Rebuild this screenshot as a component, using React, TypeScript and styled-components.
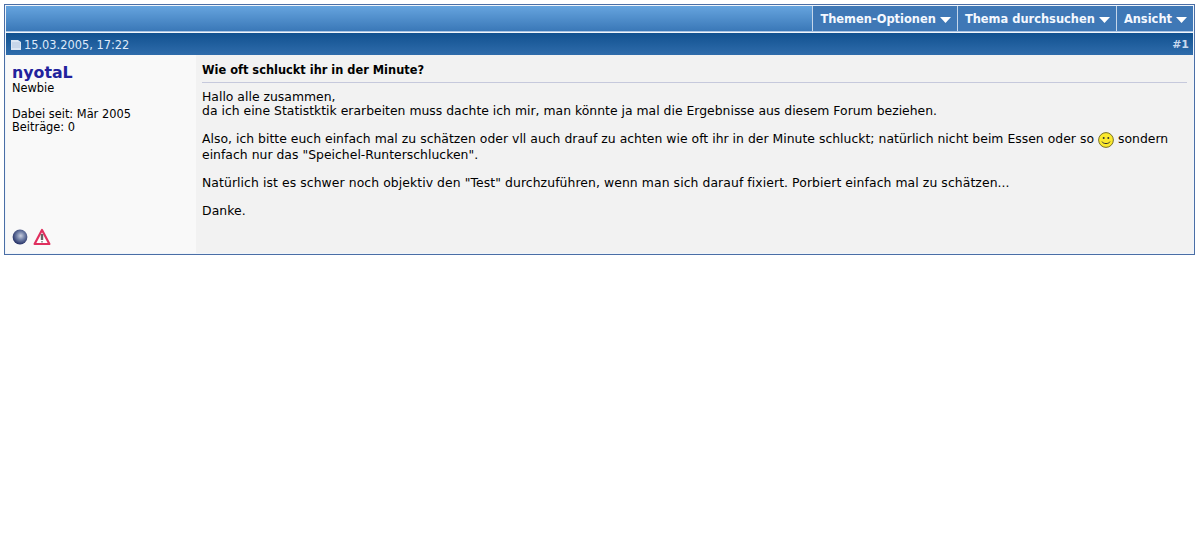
import { createGlobalStyle } from "styled-components";
import styled from "styled-components";

const Global = createGlobalStyle`
  html, body {
    margin: 0;
    padding: 0;
    background: #fff;
  }
  body {
    font-family: "DejaVu Sans", Verdana, sans-serif;
    color: #000;
  }
`;

const menuItems = ["Themen-Optionen", "Thema durchsuchen", "Ansicht"];

export default function App() {
  return (
    <Page>
      <Global />
      <Frame>
        <Toolbar>
          {menuItems.map((item) => (
            <MenuCell key={item}>
              {item}
              <Caret viewBox="0 0 11 6">
                <path d="M0 0h11L5.5 6z" fill="#fff" />
              </Caret>
            </MenuCell>
          ))}
        </Toolbar>

        <PostHead>
          <DateLine>
            <PostIcon viewBox="0 0 10 10">
              <path d="M0 0h7l3 2v8H0z" fill="#dbe5f3" />
              <path d="M1 3h8M1 5h8M1 7h8" stroke="#b4c6e0" strokeWidth="1" />
            </PostIcon>
            15.03.2005, 17:22
          </DateLine>
          <PostNumber>#1</PostNumber>
        </PostHead>

        <PostRow>
          <UserColumn>
            <UserName>nyotaL</UserName>
            <UserTitle>Newbie</UserTitle>
            <UserStats>
              <div>Dabei seit: Mär 2005</div>
              <div>Beiträge: 0</div>
            </UserStats>
            <UserIcons>
              <svg width="16" height="16" viewBox="0 0 16 16">
                <defs>
                  <radialGradient id="orb" cx="0.55" cy="0.42" r="0.6">
                    <stop offset="0" stopColor="#c9cede" />
                    <stop offset="0.45" stopColor="#7382a8" />
                    <stop offset="1" stopColor="#1f2b62" />
                  </radialGradient>
                </defs>
                <circle cx="8" cy="8" r="7.4" fill="url(#orb)" />
              </svg>
              <svg width="18" height="18" viewBox="0 0 18 18">
                <path d="M9 2 16.4 16H1.6z" fill="#fff" stroke="#e0305f" strokeWidth="2.2" strokeLinejoin="round" />
                <path d="M9 6v6" stroke="#666" strokeWidth="2.4" />
                <path d="M9 13v1.6" stroke="#888" strokeWidth="1.6" />
              </svg>
            </UserIcons>
          </UserColumn>

          <MessageColumn>
            <MessageTitle>Wie oft schluckt ihr in der Minute?</MessageTitle>
            <Paragraph>
              Hallo alle zusammen,
              <br />
              da ich eine Statistktik erarbeiten muss dachte ich mir, man könnte ja mal die Ergebnisse aus diesem Forum beziehen.
            </Paragraph>
            <Paragraph $tracking={0.022}>
              Also, ich bitte euch einfach mal zu schätzen oder vll auch drauf zu achten wie oft ihr in der Minute schluckt; natürlich nicht beim Essen oder so{" "}
              <Smiley viewBox="0 0 16 16">
                <circle cx="8" cy="8" r="7.4" fill="#fbe92e" stroke="#6b6320" strokeWidth="0.9" />
                <circle cx="5.7" cy="6" r="1" fill="#333" />
                <circle cx="10.3" cy="6" r="1" fill="#333" />
                <path d="M4 9.6c1.2 2.6 6.8 2.6 8 0" fill="none" stroke="#333" strokeWidth="1" />
              </Smiley>{" "}
              sondern
              <br />
              einfach nur das "Speichel-Runterschlucken".
            </Paragraph>
            <Paragraph $tracking={0.08}>
              Natürlich ist es schwer noch objektiv den "Test" durchzuführen, wenn man sich darauf fixiert. Porbiert einfach mal zu schätzen...
            </Paragraph>
            <Paragraph $tracking={0.1}>Danke.</Paragraph>
          </MessageColumn>
        </PostRow>
      </Frame>
    </Page>
  );
}

const Page = styled.div`
  padding: 4px 4px 0;
  min-height: 100vh;
  box-sizing: border-box;
`;

const Frame = styled.div`
  width: 1191px;
  box-sizing: border-box;
  border: 1px solid #4a6ea6;
  background: #f0f5fb;
  padding: 1px;
`;

const Toolbar = styled.div`
  display: flex;
  justify-content: flex-end;
  height: 25px;
  background: linear-gradient(#66a4de, #3a78b8);
  border-bottom: 1px solid #a9c4e4;
`;

const MenuCell = styled.div`
  display: flex;
  align-items: center;
  gap: 4px;
  padding: 2px 6px 0 7px;
  background: #3f78b6;
  border-left: 1px solid #c5d6ea;
  color: #f4f8ff;
  font-weight: bold;
  font-size: 11.45px;
  line-height: 23px;
  white-space: nowrap;
`;

const Caret = styled.svg`
  width: 11px;
  height: 6px;
`;

const PostHead = styled.div`
  display: flex;
  justify-content: space-between;
  align-items: center;
  height: 22px;
  margin-top: 1px;
  padding: 1px 4px 0 5px;
  box-sizing: border-box;
  background: linear-gradient(#115190, #2f6cab);
  color: #dfeafa;
  font-size: 11.4px;
`;

const DateLine = styled.div`
  display: flex;
  align-items: center;
  gap: 3px;
`;

const PostIcon = styled.svg`
  width: 10px;
  height: 10px;
  margin-top: 1px;
`;

const PostNumber = styled.div`
  font-weight: bold;
  font-size: 11px;
  color: #c9d9ee;
`;

const PostRow = styled.div`
  display: flex;
  height: 198px;
`;

const UserColumn = styled.div`
  position: relative;
  width: 190px;
  box-sizing: border-box;
  padding: 9px 6px 0;
  background: #f9f9f9;
  font-size: 11.4px;
  line-height: 13px;
`;

const UserName = styled.div`
  color: #22229c;
  font-size: 15.8px;
  font-weight: bold;
  line-height: 18px;
`;

const UserTitle = styled.div`
  line-height: 13px;
`;

const UserStats = styled.div`
  margin-top: 13px;
`;

const UserIcons = styled.div`
  position: absolute;
  left: 6px;
  bottom: 7px;
  display: flex;
  align-items: center;
  gap: 5px;
`;

const MessageColumn = styled.div`
  flex: 1;
  padding: 9px 6px 0;
  background: #f2f2f2;
`;

const MessageTitle = styled.div`
  font-size: 11.4px;
  font-weight: bold;
  line-height: 13px;
  padding-bottom: 5px;
  margin-bottom: 7px;
  border-bottom: 1px solid #c6c9dc;
`;

const Paragraph = styled.p<{ $tracking?: number }>`
  margin: 0 0 14px;
  font-size: 12.4px;
  line-height: 14px;
  letter-spacing: ${({ $tracking = 0.01 }) => $tracking}px;
`;

const Smiley = styled.svg`
  width: 16px;
  height: 16px;
  vertical-align: -5px;
`;
